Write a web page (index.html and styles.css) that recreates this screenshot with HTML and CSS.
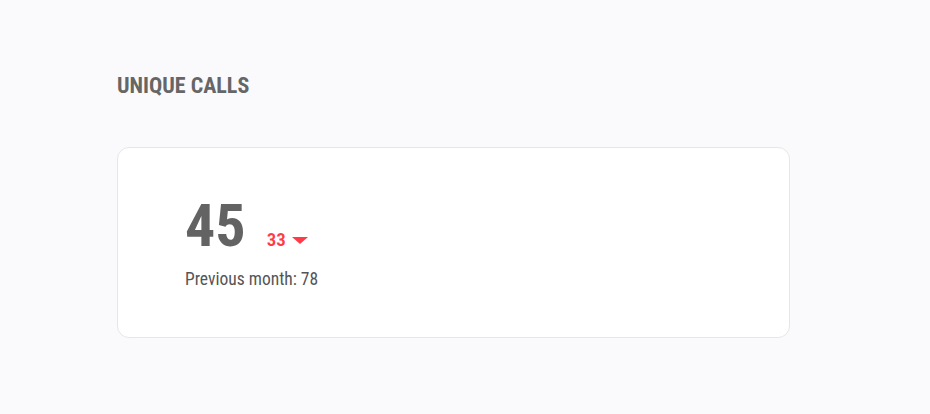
FILE: index.html
```html
<!DOCTYPE html>
<html>
<head>
<meta charset="utf-8">
<link rel="stylesheet" href="styles.css">
</head>
<body>
<main class="page">
  <h2 class="title">UNIQUE CALLS</h2>
  <section class="card">
    <div class="stat-row">
      <span class="value">45</span>
      <span class="delta">33
        <svg class="arrow" width="16" height="7" viewBox="0 0 16 7"><path d="M0 0H16L8 7Z" fill="#ff3b47"/></svg>
      </span>
    </div>
    <div class="previous">Previous month: 78</div>
  </section>
</main>
</body>
</html>
```
FILE: styles.css
```css
html, body {
  margin: 0;
  padding: 0;
  background: #fafafd;
  font-family: Roboto, "Liberation Sans", sans-serif;
}
.page {
  padding: 74px 0 0 117px;
  width: 673px;
}
.title {
  margin: 0;
  font-size: 22px;
  font-weight: 700;
  color: #666666;
  font-stretch: condensed;
  line-height: 24px;
}
.card {
  margin-top: 49px;
  height: 191px;
  box-sizing: border-box;
  background: #ffffff;
  border: 1px solid #e6e6ea;
  border-radius: 12px;
  padding: 48px 67px 0;
}
.stat-row {
  display: flex;
  align-items: baseline;
  gap: 21px;
}
.value {
  font-size: 60px;
  font-weight: 700;
  color: #636363;
  font-stretch: condensed;
  line-height: 60px;
}
.delta {
  font-size: 19px;
  font-weight: 600;
  color: #ff3b47;
  font-stretch: condensed;
  display: inline-flex;
  align-items: center;
  gap: 6px;
  position: relative;
  top: 0;
}
.arrow { margin-top: 2px; }
.previous {
  margin-top: 13px;
  font-size: 17.5px;
  color: #555555;
  font-stretch: condensed;
}
```
